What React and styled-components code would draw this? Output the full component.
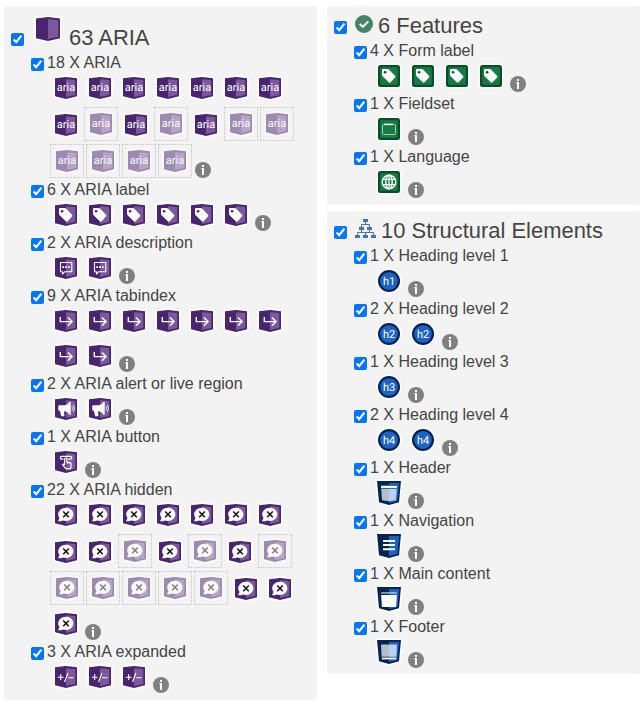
import React from "react";
import styled, { createGlobalStyle, css } from "styled-components";

const GlobalStyle = createGlobalStyle`
  * { box-sizing: border-box; }
  body {
    margin: 0;
    background: #fff;
    color: #444;
    font: 16px/20px "Liberation Sans", Arial, sans-serif;
  }
`;

const Page = styled.main`
  display: flex;
  align-items: flex-start;
  gap: 10px;
  padding: 6px 4px;
  width: 644px;
`;

const Column = styled.div`
  display: flex;
  flex-direction: column;
  gap: 6px;
  width: 313px;
`;

const Panel = styled.section`
  background: #f3f3f3;
  border-radius: 3px;
  padding-bottom: ${(p) => p.$bottom}px;
`;

const Checkbox = styled.input.attrs({ type: "checkbox", defaultChecked: true })`
  flex: none;
  width: 13px;
  height: 13px;
  margin: 0;
`;

const PanelHeader = styled.header`
  display: flex;
  align-items: flex-end;
  height: ${(p) => p.$height}px;
  padding: 0 0 7px 7px;
`;

const HeaderIcon = styled.span`
  display: flex;
  flex: none;
  width: ${(p) => p.$width}px;
  margin: 0 ${(p) => p.$gap}px ${(p) => p.$lift}px ${(p) => p.$before}px;
`;

const Title = styled.h2`
  margin: 0 0 -5px;
  font-size: 21.95px;
  font-weight: 400;
  line-height: 26px;
  white-space: nowrap;
`;

const Group = styled.div`
  padding-left: 27px;
`;

const GroupLabel = styled.label`
  display: flex;
  align-items: flex-start;
  gap: 3px;
  height: 18px;
  white-space: nowrap;

  ${Checkbox} {
    margin-top: 5px;
  }
`;

const IconRow = styled.div`
  display: flex;
  flex-wrap: wrap;
  align-items: flex-end;
  width: 250px;
  margin-left: 18px;
`;

const IconSlot = styled.span`
  display: flex;
  justify-content: center;
  width: 34px;
  height: 35px;
  padding-top: 4px;

  ${(p) =>
    p.$hidden &&
    css`
      height: 34px;
      margin: 1px 1px 2px;
      padding-top: 3px;
      border: 1px dotted #c4c4c4;

      svg {
        opacity: 0.5;
      }
    `}
`;

const InfoSlot = styled.span`
  display: flex;
  margin: 0 0 2px 2px;
`;

const Svg = styled.svg`
  display: block;
  flex: none;
  overflow: visible;
`;

const Cube = ({ children }) => (
  <>
    <path d="M1.8 3 13 1.2 24.2 3v18.8L13 24.6 1.8 21.8z" fill="#fff" stroke="#fff" strokeWidth="3" strokeLinejoin="round" />
    <path d="M2 3.2 13 2l11 1.2v18.1L13 24 2 21.3z" fill="#49246f" />
    <path d="M13 4.2 22.3 5v14.9L13 22z" fill="#7c589c" />
    {children}
  </>
);

const Square = ({ children }) => (
  <>
    <rect x=".5" y=".5" width="25" height="25" rx="4" fill="#fff" />
    <rect x="2" y="2" width="22" height="22" rx="2.5" fill="#024f28" />
    <rect x="4.2" y="4.2" width="17.6" height="17.6" fill="#187a45" />
    {children}
  </>
);

const Shield = ({ children }) => (
  <>
    <path d="M1 1h24l-2 21.3L13 25 3 22.3z" fill="#fff" stroke="#fff" strokeWidth="3" strokeLinejoin="round" />
    <path d="M1 1h24l-2 21.3L13 25 3 22.3z" fill="#032452" />
    <path d="M13 3h10.2l-1.8 18L13 23z" fill="#1d61c1" />
    {children}
  </>
);

const tag = (
  <path d="M7 6h4.6q.8 0 1.4.6l6 6.2q.9.9 0 1.8l-4.4 4.6q-.9.9-1.8 0l-6.2-6q-.6-.6-.6-1.4V7q0-1 1-1z" fill="#fff" />
);

const GlyphText = styled.text`
  font-family: Roboto, "Liberation Sans", sans-serif;
  font-size: ${(p) => p.$size}px;
  text-anchor: middle;
  text-rendering: geometricPrecision;
  fill: #fff;
`;

const glyphs = {
  aria: <Cube><GlyphText x="13" y="16" $size={11}>aria</GlyphText></Cube>,
  label: <Cube>{tag}<circle cx="9.1" cy="9.2" r="1.3" fill="#49246f" /></Cube>,
  description: (
    <Cube>
      <path d="M7.5 7.5h11.3v9.2h-6.9L9.5 19v-2.3h-2z" fill="none" stroke="#fff" strokeWidth="1.1" strokeLinejoin="round" />
      <path d="M9.3 11.3h1.8v1.8H9.3zM12.1 11.3h1.8v1.8h-1.8zM14.9 11.3h1.8v1.8h-1.8z" fill="#fff" />
    </Cube>
  ),
  tabindex: (
    <Cube>
      <path d="M7.3 9v4.6h11.2M14.9 9.4l4.2 4.2-4.2 4.2" fill="none" stroke="#fff" strokeWidth="1.4" />
    </Cube>
  ),
  alert: (
    <Cube>
      <path d="M5.2 10.7q0-1.4 1.3-1.4h4.6Q14.7 9 16.5 5.8h1.2v13h-1.2q-1.8-3.1-4.6-3.5h-.8l.3 4.9H8.2L7 15.3q-1.8-.4-1.8-2z" fill="#fff" />
      <path d="M18.9 10.5q1.3 1.8 0 3.7M20.4 8.7q2.4 3.6 0 7.2" stroke="#fff" strokeWidth=".9" fill="none" />
    </Cube>
  ),
  button: (
    <Cube>
      <path d="M10.4 10.2H8.7q-1.4 0-1.4-1.4t1.4-1.5h8.6q1.5 0 1.5 1.5t-1.5 1.4h-2" fill="none" stroke="#fff" strokeWidth="1.2" />
      <path d="M11.7 15.7V10q0-1 1.1-1t1.1 1v3l3.2.6q1.2.3 1.1 1.5l-.6 4.6h-4.8l-3.3-4q.6-1.2 2.2 0z" fill="none" stroke="#fff" strokeWidth="1.2" strokeLinejoin="round" />
      <path d="M14.6 13v2M16.3 13.4v1.7" stroke="#fff" strokeWidth=".7" />
    </Cube>
  ),
  hidden: (
    <Cube>
      <path d="M5 19.2 6.5 16a7.6 6.6 0 1 1 3.4 2.4Q8 19.6 5 19.2z" fill="#fff" />
      <path d="m10.2 9.4 5.6 5.8m0-5.8-5.6 5.8" stroke="#111" strokeWidth="1.5" />
    </Cube>
  ),
  expanded: (
    <Cube>
      <path d="M4.8 13.2h5.8M7.7 10.3v5.8M15 9l-3.5 9M15.3 13.7h5.2" stroke="#fff" strokeWidth="1.1" />
    </Cube>
  ),
  formLabel: <Square>{tag}<circle cx="9.1" cy="9.2" r="1.3" fill="#024f28" /></Square>,
  fieldset: (
    <Square>
      <rect x="6.5" y="8.5" width="13" height="10" rx="1.2" fill="none" stroke="#b9d6c7" strokeWidth=".9" />
      <path d="M8 8.4h9" stroke="#fff" strokeWidth="1.5" />
    </Square>
  ),
  language: (
    <Square>
      <g fill="none" stroke="#fff" strokeWidth="1.4">
        <circle cx="13" cy="13" r="6.8" />
        <ellipse cx="13" cy="13" rx="3.2" ry="6.8" />
        <path d="M6.8 10.4h12.4M6.8 15.6h12.4M13 6v14" strokeWidth="1.25" />
      </g>
    </Square>
  ),
  header: (
    <Shield>
      <path d="M5 5.5h8v15.7l-7-1z" fill="#b3bfcd" />
      <path d="M13 5.5h8l-1 14.7-7 1z" fill="#bad1ef" />
      <path d="M5 6.8h16" stroke="#fff" strokeWidth="2" />
      <path d="M5 5.3h16M5 8.5h16" stroke="#315786" strokeWidth=".9" />
    </Shield>
  ),
  navigation: (
    <Shield>
      <path d="M7 8h12M7 12.1h12M7 16.2h12" stroke="#fff" strokeWidth="2" />
    </Shield>
  ),
  main: (
    <Shield>
      <path d="M5.2 6.9H13" stroke="#a9b6c6" strokeWidth="1.5" />
      <path d="M13 6.9h7.8" stroke="#a4c2ed" strokeWidth="1.5" />
      <path d="M5.1 9.1h15.8L20.1 21H5.9z" fill="#fff" />
    </Shield>
  ),
  footer: (
    <Shield>
      <path d="M5 5.5h8v12.2H5.6z" fill="#b3bfcd" />
      <path d="M13 5.5h8l-.6 12.2H13z" fill="#bad1ef" />
      <path d="M5.8 19.5h14.4" stroke="#fff" strokeWidth="1.8" />
    </Shield>
  ),
};

for (const level of [1, 2, 3, 4]) {
  glyphs[`h${level}`] = (
    <>
      <circle cx="13" cy="13" r="12.6" fill="#fff" />
      <circle cx="13" cy="13" r="11" fill="#032452" />
      <circle cx="13" cy="13" r="8.8" fill="#1e63c5" />
      <GlyphText x="13" y="17" $size={11}>{`h${level}`}</GlyphText>
    </>
  );
}

const Glyph = ({ name }) => (
  <Svg width="26" height="26" viewBox="0 0 26 26" aria-hidden="true">{glyphs[name]}</Svg>
);

const InfoIcon = () => (
  <Svg width="16" height="16" viewBox="0 0 16 16" aria-hidden="true">
    <circle cx="8" cy="8" r="8" fill="#808080" />
    <path d="M7 3h2v2H7zM6.4 6H9v7H7V7.2h-.6z" fill="#fff" />
  </Svg>
);

const PanelIcon = ({ name }) => {
  if (name === "cube")
    return (
      <Svg width="30" height="30" viewBox="0 0 30 30">
        <path d="M2 3h26v22l-13 3L2 25z" fill="#fff" stroke="#fff" strokeWidth="2" strokeLinejoin="round" />
        <path d="M3 4.5 15 3l12 1.5v19.7L15 27 3 24.2z" fill="#49246f" />
        <path d="M15 5l10.3 1.2v16.5L15 25z" fill="#7c589c" />
      </Svg>
    );
  if (name === "check")
    return (
      <Svg width="18" height="18" viewBox="0 0 18 18">
        <circle cx="9" cy="9" r="9" fill="#468265" />
        <path d="m4.8 9 3 2.9 5.5-5.5" fill="none" stroke="#fff" strokeWidth="2" />
      </Svg>
    );
  return (
    <Svg width="21" height="19" viewBox="0 0 21 19">
      <path d="M10.5 2v4M6.5 9V5.5h8V9M2.5 17v-3.5h16V17M6.5 9v4.5M14.5 9v4.5M10.5 17v-3.5" fill="none" stroke="#4574b4" strokeWidth="1" />
      <path d="M8 0h5v3H8zM4 8h5v3H4zM12 8h5v3h-5zM0 16h5v3H0zM8 16h5v3H8zM16 16h5v3h-5z" fill="#4574b4" />
    </Svg>
  );
};

// In a pattern, "n" is a visible item and "d" is one hidden on the page.
const aria = {
  title: "63 ARIA", icon: "cube", headerHeight: 47, bottom: 5,
  iconBox: { $width: 30, $before: 9, $gap: 6, $lift: 2 },
  groups: [
    ["18 X ARIA", "aria", "nnnnnnnndndndddddd"],
    ["6 X ARIA label", "label", "nnnnnn"],
    ["2 X ARIA description", "description", "nn"],
    ["9 X ARIA tabindex", "tabindex", "nnnnnnnnn"],
    ["2 X ARIA alert or live region", "alert", "nn"],
    ["1 X ARIA button", "button", "n"],
    ["22 X ARIA hidden", "hidden", "nnnnnnnnndndnddddddnnn"],
    ["3 X ARIA expanded", "expanded", "nnn"],
  ],
};

const features = {
  title: "6 Features", icon: "check", headerHeight: 35, bottom: 5,
  iconBox: { $width: 18, $before: 8, $gap: 5, $lift: 1 },
  groups: [
    ["4 X Form label", "formLabel", "nnnn"],
    ["1 X Fieldset", "fieldset", "n"],
    ["1 X Language", "language", "n"],
  ],
};

const structure = {
  title: "10 Structural Elements", icon: "tree", headerHeight: 35, bottom: 4,
  iconBox: { $width: 21, $before: 8, $gap: 5, $lift: 1 },
  groups: [
    ["1 X Heading level 1", "h1", "n"],
    ["2 X Heading level 2", "h2", "nn"],
    ["1 X Heading level 3", "h3", "n"],
    ["2 X Heading level 4", "h4", "nn"],
    ["1 X Header", "header", "n"],
    ["1 X Navigation", "navigation", "n"],
    ["1 X Main content", "main", "n"],
    ["1 X Footer", "footer", "n"],
  ],
};

const SummaryPanel = ({ data }) => (
  <Panel $bottom={data.bottom}>
    <PanelHeader $height={data.headerHeight}>
      <Checkbox aria-label={data.title} />
      <HeaderIcon {...data.iconBox}><PanelIcon name={data.icon} /></HeaderIcon>
      <Title>{data.title}</Title>
    </PanelHeader>
    {data.groups.map(([label, icon, pattern]) => (
      <Group key={label}>
        <GroupLabel><Checkbox />{label}</GroupLabel>
        <IconRow>
          {[...pattern].map((kind, i) => (
            <IconSlot key={i} $hidden={kind === "d"}><Glyph name={icon} /></IconSlot>
          ))}
          <InfoSlot><InfoIcon /></InfoSlot>
        </IconRow>
      </Group>
    ))}
  </Panel>
);

export default function App() {
  return (
    <>
      <GlobalStyle />
      <Page>
        <Column><SummaryPanel data={aria} /></Column>
        <Column>
          <SummaryPanel data={features} />
          <SummaryPanel data={structure} />
        </Column>
      </Page>
    </>
  );
}
